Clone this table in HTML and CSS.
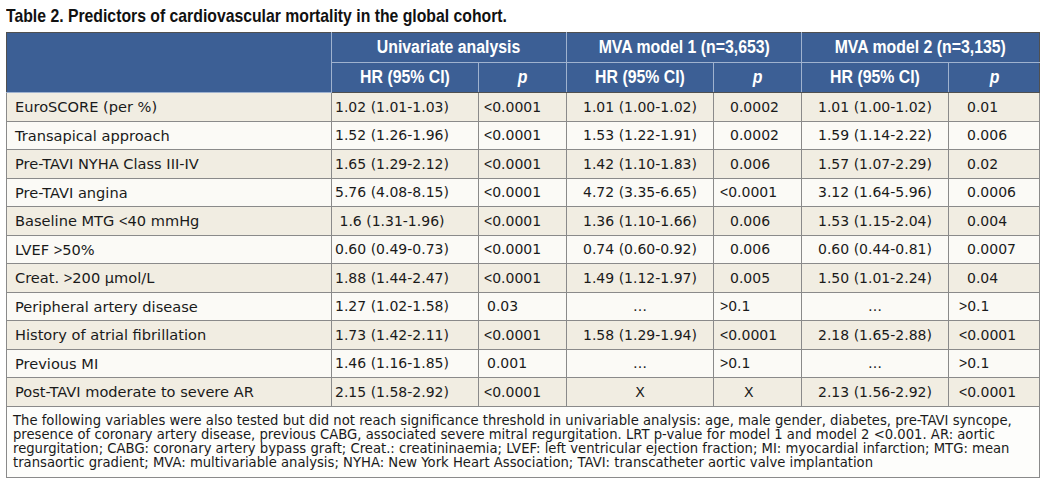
FILE: index.html
```html
<!DOCTYPE html>
<html>
<head>
<meta charset="utf-8">
<link rel="stylesheet" href="styles.css">
</head>
<body>
<div class="page">
  <h1 class="title"><span class="title-text">Table 2. Predictors of cardiovascular mortality in the global cohort.</span></h1>
  <table class="tbl">
    <colgroup>
      <col class="c-var"><col class="c-hr"><col class="c-p"><col class="c-hr"><col class="c-p"><col class="c-hr"><col class="c-p3">
    </colgroup>
    <thead>
      <tr class="h1">
        <th rowspan="2"></th>
        <th colspan="2"><span class="cond">Univariate analysis</span></th>
        <th colspan="2"><span class="cond">MVA model 1 (n=3,653)</span></th>
        <th colspan="2"><span class="cond">MVA model 2 (n=3,135)</span></th>
      </tr>
      <tr class="h2">
        <th class="hu"><span class="cond">HR (95% CI)</span></th><th><span class="cond"><i>p</i></span></th>
        <th><span class="cond">HR (95% CI)</span></th><th><span class="cond"><i>p</i></span></th>
        <th><span class="cond">HR (95% CI)</span></th><th><span class="cond"><i>p</i></span></th>
      </tr>
    </thead>
    <tbody>
      <tr class="odd"><td class="v">EuroSCORE (per %)</td><td class="hr hu">1.02 (1.01-1.03)</td><td class="pa lt"><span class="sym">&lt;</span>0.0001</td><td class="hr">1.01 (1.00-1.02)</td><td class="pb">0.0002</td><td class="hr">1.01 (1.00-1.02)</td><td class="pc">0.01</td></tr>
      <tr class="even"><td class="v">Transapical approach</td><td class="hr hu">1.52 (1.26-1.96)</td><td class="pa lt"><span class="sym">&lt;</span>0.0001</td><td class="hr">1.53 (1.22-1.91)</td><td class="pb">0.0002</td><td class="hr">1.59 (1.14-2.22)</td><td class="pc">0.006</td></tr>
      <tr class="odd"><td class="v">Pre-TAVI NYHA Class III-IV</td><td class="hr hu">1.65 (1.29-2.12)</td><td class="pa lt"><span class="sym">&lt;</span>0.0001</td><td class="hr">1.42 (1.10-1.83)</td><td class="pb">0.006</td><td class="hr">1.57 (1.07-2.29)</td><td class="pc">0.02</td></tr>
      <tr class="even"><td class="v">Pre-TAVI angina</td><td class="hr hu">5.76 (4.08-8.15)</td><td class="pa lt"><span class="sym">&lt;</span>0.0001</td><td class="hr">4.72 (3.35-6.65)</td><td class="pb lt"><span class="sym">&lt;</span>0.0001</td><td class="hr">3.12 (1.64-5.96)</td><td class="pc">0.0006</td></tr>
      <tr class="odd"><td class="v">Baseline MTG <span class="sym">&lt;</span>40 mmHg</td><td class="hr hu">1.6 (1.31-1.96)</td><td class="pa lt"><span class="sym">&lt;</span>0.0001</td><td class="hr">1.36 (1.10-1.66)</td><td class="pb">0.006</td><td class="hr">1.53 (1.15-2.04)</td><td class="pc">0.004</td></tr>
      <tr class="even"><td class="v">LVEF <span class="sym">&gt;</span>50%</td><td class="hr hu">0.60 (0.49-0.73)</td><td class="pa lt"><span class="sym">&lt;</span>0.0001</td><td class="hr">0.74 (0.60-0.92)</td><td class="pb">0.006</td><td class="hr">0.60 (0.44-0.81)</td><td class="pc">0.0007</td></tr>
      <tr class="odd"><td class="v">Creat. <span class="sym">&gt;</span>200 µmol/L</td><td class="hr hu">1.88 (1.44-2.47)</td><td class="pa lt"><span class="sym">&lt;</span>0.0001</td><td class="hr">1.49 (1.12-1.97)</td><td class="pb">0.005</td><td class="hr">1.50 (1.01-2.24)</td><td class="pc">0.04</td></tr>
      <tr class="even"><td class="v">Peripheral artery disease</td><td class="hr hu">1.27 (1.02-1.58)</td><td class="pa">0.03</td><td class="hr">…</td><td class="pb lt"><span class="sym">&gt;</span>0.1</td><td class="hr">…</td><td class="pc lt"><span class="sym">&gt;</span>0.1</td></tr>
      <tr class="odd"><td class="v">History of atrial fibrillation</td><td class="hr hu">1.73 (1.42-2.11)</td><td class="pa lt"><span class="sym">&lt;</span>0.0001</td><td class="hr">1.58 (1.29-1.94)</td><td class="pb lt"><span class="sym">&lt;</span>0.0001</td><td class="hr">2.18 (1.65-2.88)</td><td class="pc lt"><span class="sym">&lt;</span>0.0001</td></tr>
      <tr class="even"><td class="v">Previous MI</td><td class="hr hu">1.46 (1.16-1.85)</td><td class="pa">0.001</td><td class="hr">…</td><td class="pb lt"><span class="sym">&gt;</span>0.1</td><td class="hr">…</td><td class="pc lt"><span class="sym">&gt;</span>0.1</td></tr>
      <tr class="odd"><td class="v">Post-TAVI moderate to severe AR</td><td class="hr hu">2.15 (1.58-2.92)</td><td class="pa lt"><span class="sym">&lt;</span>0.0001</td><td class="hr">X</td><td class="pb x">X</td><td class="hr">2.13 (1.56-2.92)</td><td class="pc lt"><span class="sym">&lt;</span>0.0001</td></tr>
    </tbody>
    <tfoot>
      <tr><td class="note" colspan="7">The following variables were also tested but did not reach significance threshold in univariable analysis: age, male gender, diabetes, pre-TAVI syncope, presence of coronary artery disease, previous CABG, associated severe mitral regurgitation. LRT p-value for model 1 and model 2 &lt;0.001. AR: aortic regurgitation; CABG: coronary artery bypass graft; Creat.: creatininaemia; LVEF: left ventricular ejection fraction; MI: myocardial infarction; MTG: mean transaortic gradient; MVA: multivariable analysis; NYHA: New York Heart Association; TAVI: transcatheter aortic valve implantation</td></tr>
    </tfoot>
  </table>
</div>
</body>
</html>
```

FILE: styles.css
```css
html, body {
  margin: 0;
  padding: 0;
  background: #ffffff;
}

.page {
  padding: 6px 0 0 6px;
}

.title {
  margin: 0 0 6px 0;
  height: 20px;
  font-family: "Liberation Sans", Arial, sans-serif;
  font-weight: bold;
  font-size: 19px;
  line-height: 20px;
  color: #111111;
  white-space: nowrap;
}

.title-text {
  display: inline-block;
  transform: scaleX(0.83);
  transform-origin: left center;
}

.tbl {
  border-collapse: collapse;
  table-layout: fixed;
  width: 1034px;
  border: 1px solid #505050;
  font-family: "DejaVu Sans", sans-serif;
  font-size: 14px;
  color: #1a1a1a;
}

.c-var { width: 325px; }
.c-hr { width: 147px; }
.c-p { width: 88px; }
.c-p3 { width: 91px; }

.tbl thead th {
  background: #3c5f95;
  color: #ffffff;
  font-family: "Liberation Sans", Arial, sans-serif;
  font-weight: bold;
  font-size: 18px;
  height: 29px;
  padding: 0;
  text-align: center;
  white-space: nowrap;
  border: 1px solid #9fb2cf;
}

.cond {
  display: inline-block;
  transform: scaleX(0.88);
  transform-origin: center center;
}

.tbl thead tr.h1 th { border-top-color: #505050; }
.tbl thead tr.h2 th { border-bottom-color: #505050; }
.tbl thead th:first-child { border-left-color: #505050; }
.tbl thead th:last-child { border-right-color: #505050; }

.tbl tbody td {
  height: 27.5px;
  padding: 0;
  border: 1px solid #8a8a8a;
  white-space: nowrap;
}

.tbl tbody tr.odd td { background: #f1ede2; }
.tbl tbody tr.even td { background: #fbfaf6; }

.sym {
  font-family: "Liberation Sans", Arial, sans-serif;
}

.tbl td.v {
  padding-left: 8px;
  font-size: 14.6px;
}
.tbl td.hr { text-align: center; }
.tbl td.hr.hu { padding-right: 26px; }
.tbl td.pa { padding-left: 8px; }
.tbl td.pa.lt { padding-left: 5px; }
.tbl td.pb { padding-left: 16px; }
.tbl td.pb.lt { padding-left: 6px; }
.tbl td.pb.x { padding-left: 30px; }
.tbl td.pc { padding-left: 18px; }
.tbl td.pc.lt { padding-left: 10px; }

.tbl td.note {
  background: #fdfdfb;
  border: 1px solid #8a8a8a;
  padding: 7px 6px 7px 6px;
  font-size: 13.2px;
  line-height: 14px;
  color: #1a1a1a;
}
```
